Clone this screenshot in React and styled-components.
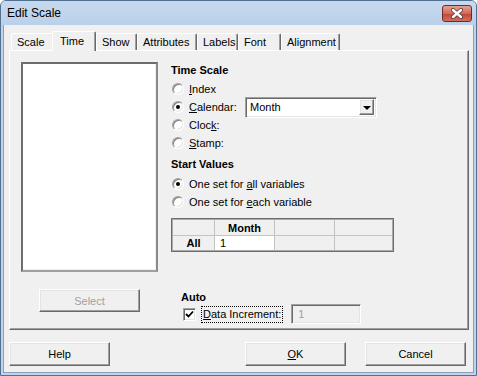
import React from "react";
import styled, { createGlobalStyle, css } from "styled-components";

const GlobalStyle = createGlobalStyle`
  html, body { margin: 0; padding: 0; background: #fff; }
  body {
    font-family: "Liberation Sans", Arial, sans-serif;
    font-size: 11px;
    color: #000;
  }
  * { box-sizing: border-box; }
`;

const raised = css`
  border: 1px solid;
  border-color: #fff #696969 #696969 #fff;
  box-shadow: inset -1px -1px #a0a0a0, inset 1px 1px #e3e3e3;
  background: #f0f0f0;
`;

const sunken = css`
  border: 1px solid;
  border-color: #a0a0a0 #fff #fff #a0a0a0;
  box-shadow: inset 1px 1px #696969, inset -1px -1px #e3e3e3;
`;

const Window = styled.div`
  width: 477px;
  height: 376px;
  display: flex;
  flex-direction: column;
  border: 1px solid #52708f;
  border-radius: 6px 6px 0 0;
  background: #bfd4ec;
  padding: 0 2px 2px;
  overflow: hidden;
`;

const TitleBar = styled.div`
  height: 24px;
  flex: none;
  margin: 0 -2px;
  padding: 0 4px 0 6px;
  display: flex;
  align-items: center;
  justify-content: space-between;
  background: linear-gradient(#c6d9ee, #bad0ea);
  font-size: 12px;
`;

const CloseButton = styled.div`
  width: 30px;
  height: 17px;
  margin-top: 1px;
  border: 1px solid #6f2a22;
  border-radius: 3px;
  background: linear-gradient(#e4a293, #cf6a5a 50%, #c0443a 51%, #d2705f);
  display: flex;
  align-items: center;
  justify-content: center;
`;

const Client = styled.div`
  flex: 1;
  display: flex;
  flex-direction: column;
  padding-top: 6px;
  background: #f0f0f0;
  border: 1px solid #8aa0b8;
  border-top: none;
`;

const TabRow = styled.div`
  display: flex;
  align-items: flex-end;
  height: 19px;
  margin-left: 7px;
`;

const Tab = styled.div`
  position: relative;
  width: ${(p) => p.$w}px;
  height: ${(p) => (p.$active ? 20 : 17)}px;
  margin-left: ${(p) => (p.$active ? -2 : 0)}px;
  margin-bottom: ${(p) => (p.$active ? -1 : 0)}px;
  padding: 0 0 ${(p) => (p.$active ? 1 : 0)}px ${(p) => (p.$active ? 7 : 5)}px;
  z-index: ${(p) => (p.$active ? 2 : 1)};
  display: flex;
  align-items: center;
  background: #f0f0f0;
  border: 1px solid;
  border-bottom: none;
  border-color: #fff #696969 transparent #fff;
  border-radius: 2px 2px 0 0;
  box-shadow: inset -1px 0 #a0a0a0;
  white-space: nowrap;
`;

const Panel = styled.div`
  margin-left: 5px;
  width: 460px;
  height: 280px;
  flex: none;
  display: grid;
  grid-template-columns: 137px 1fr;
  column-gap: 13px;
  padding: 11px 11px 5px 11px;
  ${raised};
  box-shadow: inset -1px -1px #a0a0a0;
`;

const LeftCol = styled.div`
  display: flex;
  flex-direction: column;
`;

const ListBox = styled.div`
  height: 210px;
  background: #fff;
  border: 2px solid;
  border-color: #6d6d6d #8a8a8a #a0a0a0 #6d6d6d;
  box-shadow: inset -1px -1px #f0f0f0;
`;

const Button = styled.div`
  width: 101px;
  height: ${(p) => p.$h || 24}px;
  display: flex;
  align-items: center;
  justify-content: center;
  color: ${(p) => (p.$disabled ? "#a0a0a0" : "#000")};
  ${raised};
`;

const SelectButton = styled(Button)`
  margin: 17px 0 0 18px;
`;

const RightCol = styled.div`
  display: flex;
  flex-direction: column;
`;

const Heading = styled.div`
  height: 14px;
  line-height: 14px;
  font-weight: bold;
  margin-top: ${(p) => p.$mt || 0}px;
  margin-left: ${(p) => p.$ml || 0}px;
`;

const RadioGroup = styled.div`
  display: flex;
  flex-direction: column;
  margin-top: ${(p) => p.$mt}px;
`;

const RadioRow = styled.div`
  height: 18px;
  display: flex;
  align-items: center;
  padding-left: 1px;
`;

const RadioLabel = styled.label`
  display: flex;
  align-items: center;
  gap: 5px;
  width: ${(p) => (p.$w ? `${p.$w}px` : "auto")};
`;

const RadioDot = styled.span`
  position: relative;
  width: 12px;
  height: 12px;
  border-radius: 50%;
  background: #fff;
  border: 1px solid;
  border-color: #a0a0a0 #fff #fff #a0a0a0;
  box-shadow: inset 1px 1px #808080, inset -1px -1px #e3e3e3;
  &::after {
    content: "";
    display: ${(p) => (p.$checked ? "block" : "none")};
    position: absolute;
    left: 3px;
    top: 3px;
    width: 4px;
    height: 4px;
    border-radius: 50%;
    background: #000;
  }
`;

const Combo = styled.div`
  width: 132px;
  height: 21px;
  flex: none;
  display: flex;
  align-items: center;
  padding: 1px 2px 1px 1px;
  background: #fff;
  ${sunken};
`;

const ComboText = styled.span`
  flex: 1;
  padding-left: 3px;
`;

const ComboArrow = styled.div`
  width: 15px;
  height: 16px;
  display: flex;
  align-items: center;
  justify-content: center;
  ${raised};
  &::after {
    content: "";
    border-left: 4px solid transparent;
    border-right: 4px solid transparent;
    border-top: 4px solid #000;
    margin-top: 1px;
  }
`;

const TableFrame = styled.div`
  margin-top: 7px;
  width: 223px;
  border: 1px solid #6d6d6d;
  padding: 1px;
  background: #a9a9a9;
`;

const Table = styled.div`
  display: grid;
  grid-template-columns: 41px 59px 59px 1fr;
  grid-template-rows: 15px 14px;
  gap: 1px;
  background: #c3c3c3;
`;

const Cell = styled.div`
  display: flex;
  align-items: center;
  justify-content: ${(p) => p.$align || "center"};
  padding-left: ${(p) => (p.$align ? 5 : 0)}px;
  background: ${(p) => (p.$white ? "#fff" : "#f0f0f0")};
  font-weight: ${(p) => (p.$bold ? "bold" : "normal")};
`;

const AutoGroup = styled.div`
  margin-top: auto;
  display: flex;
  flex-direction: column;
`;

const CheckRow = styled.div`
  height: 20px;
  display: flex;
  align-items: center;
  margin-left: 12px;
`;

const CheckBox = styled.span`
  width: 13px;
  height: 13px;
  display: flex;
  align-items: center;
  justify-content: center;
  background: #fff;
  ${sunken};
`;

const FocusLabel = styled.span`
  margin-left: 5px;
  height: 17px;
  padding: 0 2px;
  display: flex;
  align-items: center;
  outline: 1px dotted #000;
  outline-offset: -1px;
`;

const Field = styled.div`
  margin-left: 8px;
  width: 70px;
  height: 20px;
  display: flex;
  align-items: center;
  padding-left: 6px;
  color: #a0a0a0;
  background: #f0f0f0;
  ${sunken};
`;

const Footer = styled.div`
  display: flex;
  gap: 19px;
  margin-top: 12px;
  padding: 0 7px 0 5px;
`;

const Spacer = styled.div`
  flex: 1;
`;

const tabs = [
  ["Scale", 43],
  ["Time", 44],
  ["Show", 41],
  ["Attributes", 60],
  ["Labels", 41],
  ["Font", 43],
  ["Alignment", 59],
];

const Radio = ({ checked, children, w }) => (
  <RadioRow>
    <RadioLabel $w={w}>
      <RadioDot $checked={checked} />
      <span>{children}</span>
    </RadioLabel>
  </RadioRow>
);

export default function App() {
  return (
    <>
      <GlobalStyle />
      <Window>
        <TitleBar>
          <span>Edit Scale</span>
          <CloseButton>
            <svg width="14" height="11" viewBox="0 0 14 11">
              <path d="M3 2 L11 9 M11 2 L3 9" stroke="#5a3a36" strokeWidth="4" strokeLinecap="round" />
              <path d="M3 2 L11 9 M11 2 L3 9" stroke="#fff" strokeWidth="2.4" strokeLinecap="round" />
            </svg>
          </CloseButton>
        </TitleBar>
        <Client>
          <TabRow>
            {tabs.map(([name, w]) => (
              <Tab key={name} $w={w} $active={name === "Time"}>
                {name}
              </Tab>
            ))}
          </TabRow>
          <Panel>
            <LeftCol>
              <ListBox />
              <SelectButton $disabled $h={23}>Select</SelectButton>
            </LeftCol>
            <RightCol>
              <Heading $mt={1}>Time Scale</Heading>
              <RadioGroup $mt={3}>
                <Radio><u>I</u>ndex</Radio>
                <RadioRow>
                  <RadioLabel $w={73}>
                    <RadioDot $checked />
                    <span><u>C</u>alendar:</span>
                  </RadioLabel>
                  <Combo>
                    <ComboText>Month</ComboText>
                    <ComboArrow />
                  </Combo>
                </RadioRow>
                <Radio>Cloc<u>k</u>:</Radio>
                <Radio><u>S</u>tamp:</Radio>
              </RadioGroup>
              <Heading $mt={5}>Start Values</Heading>
              <RadioGroup $mt={4}>
                <Radio checked>One set for <u>a</u>ll variables</Radio>
                <Radio>One set for <u>e</u>ach variable</Radio>
              </RadioGroup>
              <TableFrame>
                <Table>
                  <Cell />
                  <Cell $bold>Month</Cell>
                  <Cell />
                  <Cell />
                  <Cell $bold>All</Cell>
                  <Cell $white $align="flex-start">1</Cell>
                  <Cell />
                  <Cell />
                </Table>
              </TableFrame>
              <AutoGroup>
                <Heading $ml={10}>Auto</Heading>
                <CheckRow>
                  <CheckBox>
                    <svg width="9" height="9" viewBox="0 0 9 9">
                      <path d="M1 4 L3.5 6.5 L8 1.5" fill="none" stroke="#000" strokeWidth="1.8" />
                    </svg>
                  </CheckBox>
                  <FocusLabel><u>D</u>ata Increment:</FocusLabel>
                  <Field>1</Field>
                </CheckRow>
              </AutoGroup>
            </RightCol>
          </Panel>
          <Footer>
            <Button>Help</Button>
            <Spacer />
            <Button><u>O</u>K</Button>
            <Button>Cancel</Button>
          </Footer>
        </Client>
      </Window>
    </>
  );
}
